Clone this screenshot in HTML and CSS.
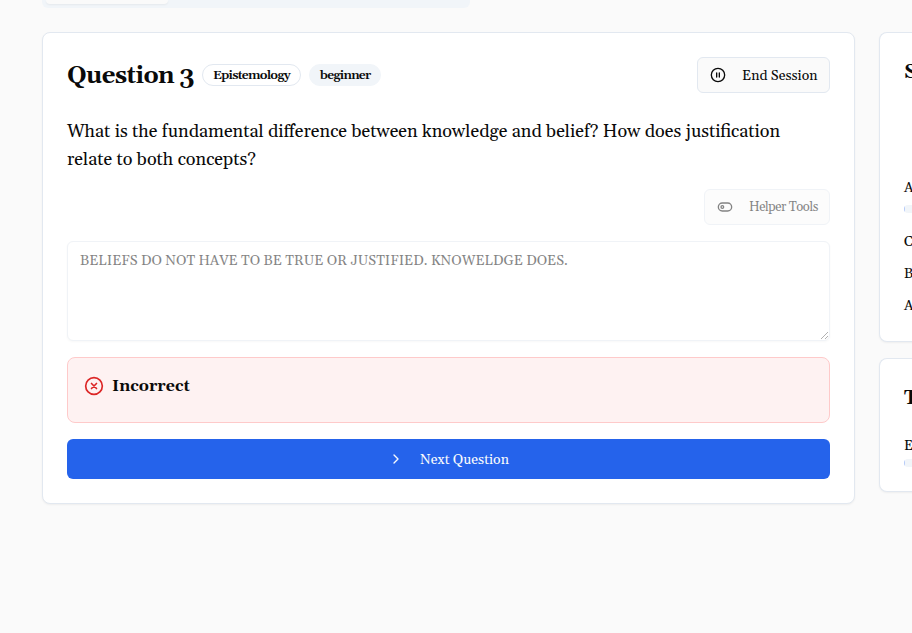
FILE: index.html
```html
<!DOCTYPE html>
<html lang="en">
<head>
<meta charset="utf-8">
<title>Practice Session</title>
<link rel="stylesheet" href="styles.css">
</head>
<body>
<nav class="tabs"><span class="tab-active"></span></nav>
<div class="layout">
  <main class="card question-card">
    <header class="card-header">
      <h1 class="title">Question 3</h1>
      <span class="badge badge-outline">Epistemology</span>
      <span class="badge badge-muted">beginner</span>
      <button class="btn end-btn">
        <svg class="icon" viewBox="0 0 24 24"><circle cx="12" cy="12" r="10"/><path d="M10 15V9M14 15V9"/></svg>
        <span class="btn-label">End Session</span>
      </button>
    </header>
    <p class="prompt">What is the fundamental difference between knowledge and belief? How does justification<br>relate to both concepts?</p>
    <div class="tools">
      <button class="btn helper-btn" disabled>
        <svg class="icon" viewBox="0 0 24 24"><rect x="2" y="6" width="20" height="12" rx="6"/><circle cx="8" cy="12" r="2"/></svg>
        <span>Helper Tools</span>
      </button>
    </div>
    <textarea class="answer" disabled>BELIEFS DO NOT HAVE TO BE TRUE OR JUSTIFIED. KNOWELDGE DOES.</textarea>
    <div class="result">
      <svg class="result-icon" viewBox="0 0 24 24"><circle cx="12" cy="12" r="10"/><path d="m15 9-6 6M9 9l6 6"/></svg>
      <strong class="result-label">Incorrect</strong>
    </div>
    <button class="next-btn">
      <svg class="icon" viewBox="0 0 24 24"><path d="m9 18 6-6-6-6"/></svg>
      <span class="btn-label">Next Question</span>
    </button>
  </main>
  <aside class="sidebar">
    <section class="card stats-card">
      <h2 class="side-title">Session Stats</h2>
      <div class="stat">Accuracy</div>
      <div class="bar"></div>
      <div class="stat-row">Correct</div>
      <div class="stat-row">Best Streak</div>
      <div class="stat-row">Average Time</div>
    </section>
    <section class="card topics-card">
      <h2 class="side-title">Topics</h2>
      <div class="stat">Epistemology</div>
      <div class="bar"></div>
    </section>
  </aside>
</div>
</body>
</html>
```
FILE: styles.css
```css
* { box-sizing: border-box; }
body {
  margin: 0;
  height: 633px;
  overflow: hidden;
  background: #fafafa;
  color: #0a0a0a;
  font-family: Gelasio, Georgia, "Liberation Serif", serif;
  font-size: 14px;
  line-height: 20px;
}
h1, h2, p { margin: 0; }
button { font: inherit; color: inherit; }
.tabs {
  width: 428px;
  height: 8px;
  margin-left: 42px;
  padding: 0 4px 4px;
  background: #f1f5f9;
  border-radius: 0 0 6px 6px;
}
.tab-active {
  display: block;
  width: 122px;
  height: 4px;
  background: #fafafa;
  border-radius: 0 0 4px 4px;
  box-shadow: 0 1px 2px rgb(0 0 0 / 5%);
}
.layout {
  display: grid;
  grid-template-columns: 813px 1fr;
  gap: 24px;
  align-items: start;
  margin: 24px 0 0 42px;
}
.card {
  background: #fff;
  border: 1px solid #e2e8f0;
  border-radius: 8px;
  box-shadow: 0 1px 2px rgb(0 0 0 / 5%);
  padding: 24px;
}
.question-card { height: 472px; }
.card-header { display: flex; align-items: center; gap: 8px; height: 36px; }
.title {
  width: 127px;
  padding-top: 2px;
  font-size: 24px;
  line-height: 32px;
  font-weight: 700;
  letter-spacing: -.59px;
  white-space: nowrap;
}
.badge {
  height: 22px;
  padding: 0 10px;
  border: 1px solid #e2e8f0;
  border-radius: 11px;
  font-size: 12.8px;
  line-height: 20px;
  font-weight: 600;
  letter-spacing: -.72px;
  white-space: nowrap;
}
.badge-outline { width: 99px; }
.badge-muted { width: 72px; background: #f1f5f9; border-color: #f1f5f9; }
.btn {
  display: flex;
  align-items: center;
  height: 36px;
  padding: 0 12px;
  background: #fafafa;
  border: 1px solid #e2e8f0;
  border-radius: 6px;
  white-space: nowrap;
}
.btn-label { padding-top: 2px; }
.end-btn { width: 133px; margin-left: auto; }
.icon { flex: none; width: 16px; height: 16px; margin-right: 16px; }
.icon, .result-icon { fill: none; stroke: currentColor; stroke-width: 2; stroke-linecap: round; stroke-linejoin: round; }
.prompt {
  margin-top: 25px;
  font-size: 18px;
  line-height: 28px;
  white-space: nowrap;
}
.tools { display: flex; justify-content: flex-end; margin-top: 15px; }
.helper-btn { width: 126px; font-size: 13px; letter-spacing: -.44px; opacity: .5; }
.answer {
  display: block;
  width: 100%;
  height: 100px;
  margin-top: 16px;
  padding: 9px 12px 7px;
  background: #fff;
  color: #0a0a0a;
  border: 1px solid #e2e8f0;
  border-radius: 6px;
  box-shadow: 0 1px 2px rgb(0 0 0 / 5%);
  font: inherit;
  opacity: .5;
}
.result {
  display: flex;
  height: 66px;
  margin-top: 16px;
  padding: 16px;
  gap: 8px;
  background: #fef2f2;
  border: 1px solid #fecaca;
  border-radius: 8px;
}
.result-icon { width: 20px; height: 20px; margin-top: 2px; color: #dc2626; }
.result-label { font-size: 16px; line-height: 24px; height: 24px; letter-spacing: .04px; }
.next-btn {
  display: flex;
  align-items: center;
  justify-content: center;
  width: 100%;
  height: 40px;
  margin-top: 16px;
  background: #2563eb;
  color: #f8fafc;
  border: 0;
  border-radius: 6px;
}
.sidebar { display: grid; gap: 16px; min-width: 0; margin-right: -1px; }
.sidebar .card {
  padding-right: 0;
  border-right: 0;
  border-radius: 8px 0 0 8px;
  overflow: hidden;
  white-space: nowrap;
}
.stats-card { height: 310px; }
.topics-card { height: 134px; }
.side-title { padding-top: 1px; font-size: 20px; line-height: 28px; }
.stats-card .stat { margin-top: 92px; }
.topics-card .stat { margin-top: 24px; }
.bar {
  width: 345px;
  height: 8px;
  background: linear-gradient(90deg, #b4caf8 1px, #f1f5f9 1px);
  border-radius: 4px;
}
.stats-card .bar { margin: 7px 0 19px; }
.topics-card .bar { margin-top: 3px; }
.stat-row { margin-bottom: 12px; }
```
